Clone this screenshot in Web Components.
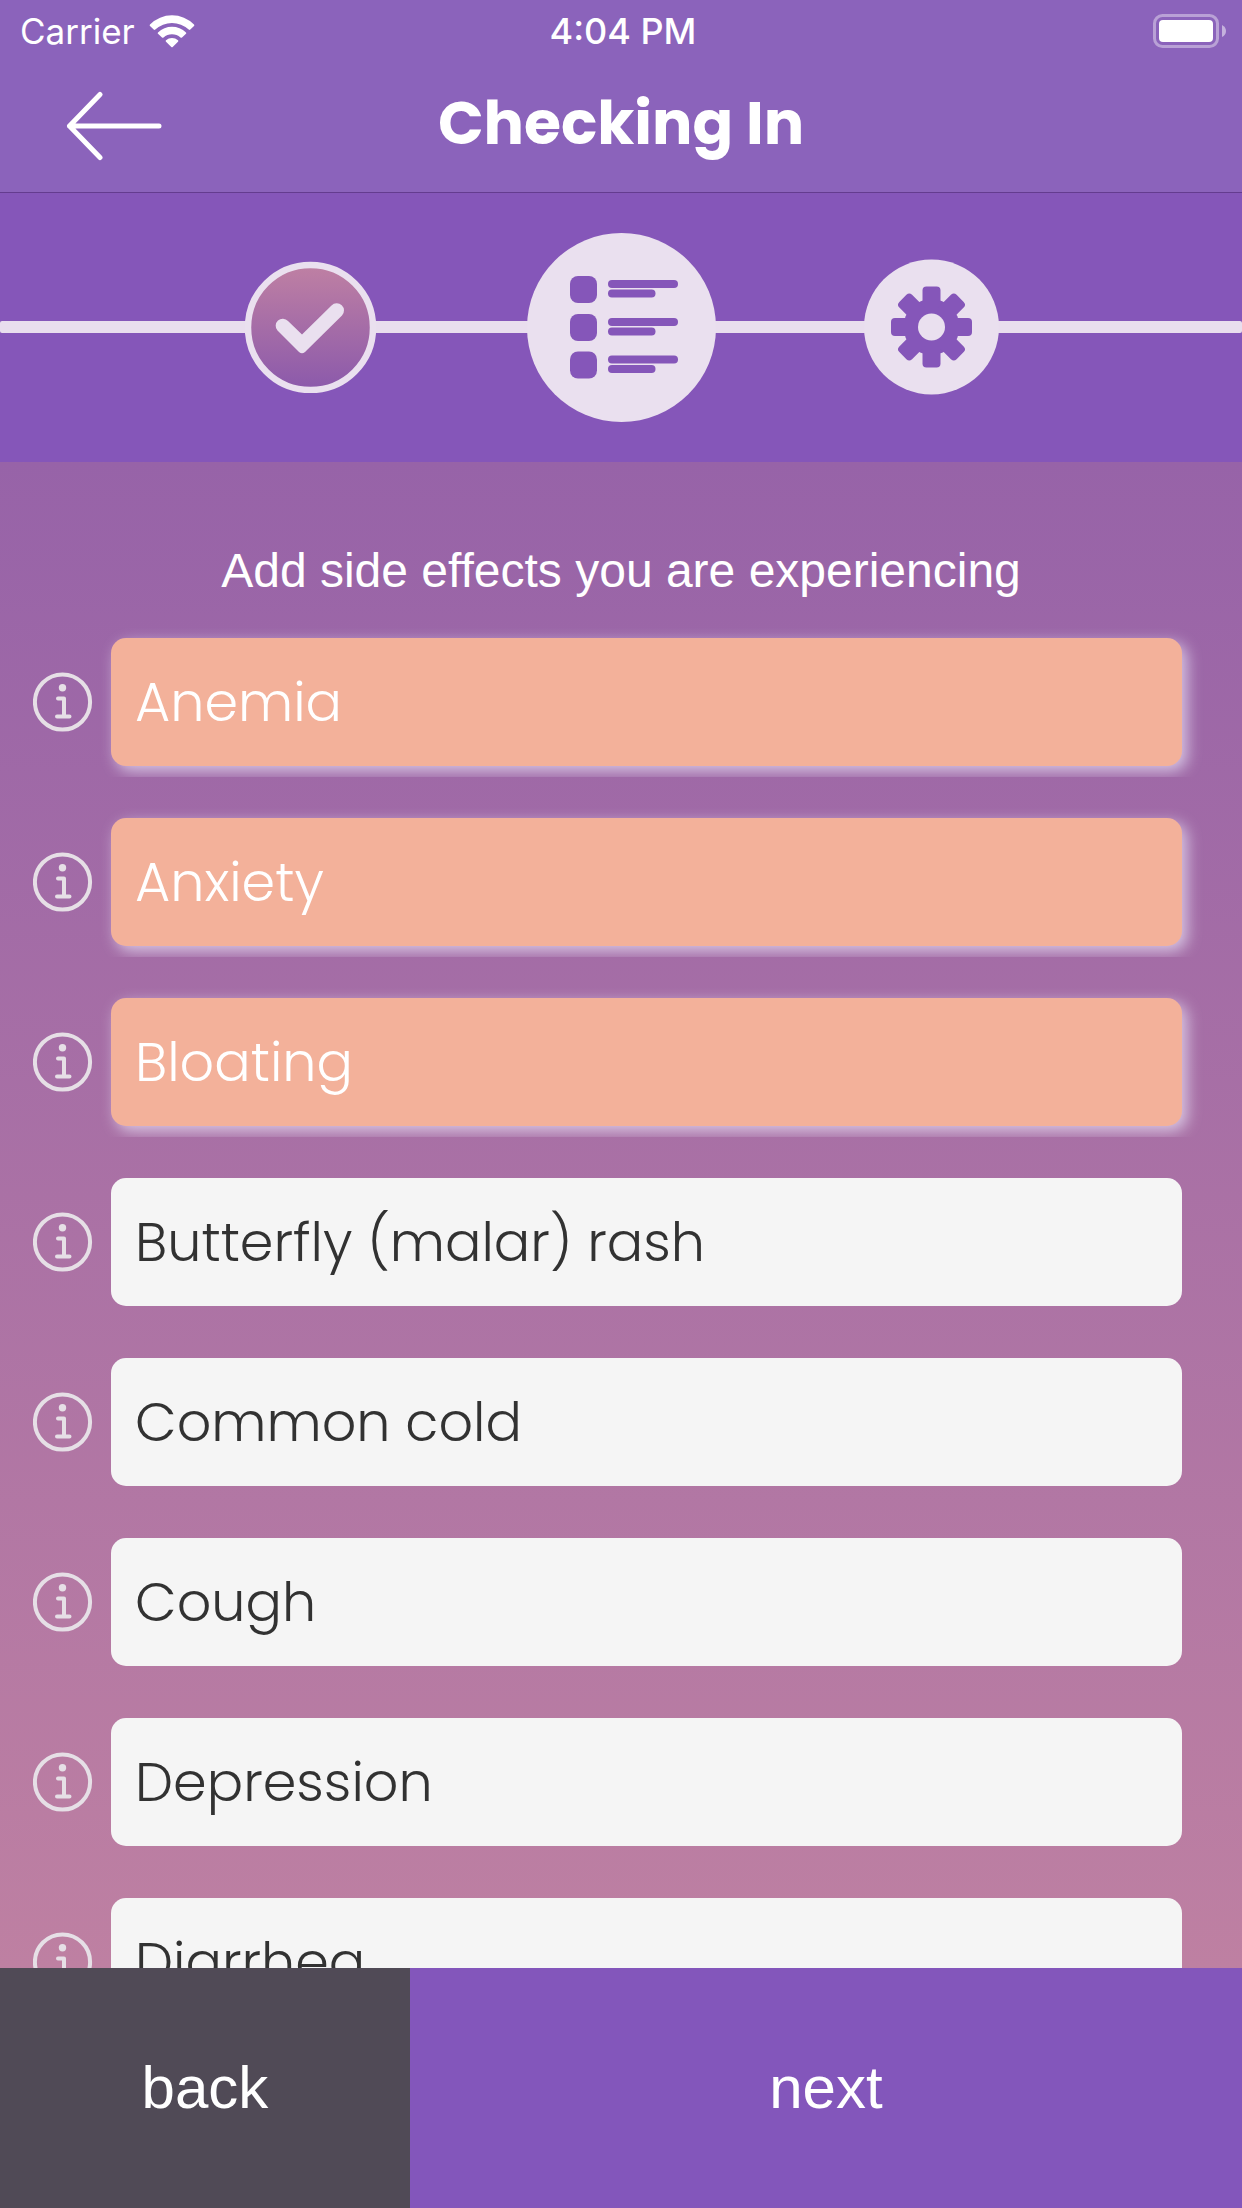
<!DOCTYPE html>
<html lang="en">
<head>
<meta charset="utf-8">
<meta name="viewport" content="width=device-width, initial-scale=1">
<title>Checking In</title>
<style>
  html, body { margin: 0; height: 100%; }
  body { font-family: "Liberation Sans", Helvetica, Arial, sans-serif; color: #fff; background: #8556b9; }
</style>
</head>
<body>
<check-in-app></check-in-app>

<script>
const define = (name, html, setup) => customElements.define(name, class extends HTMLElement {
  constructor() {
    super();
    const t = document.createElement('template');
    t.innerHTML = html;
    this.attachShadow({ mode: 'open' }).append(t.content.cloneNode(true));
  }
  connectedCallback() { if (setup) setup(this, this.shadowRoot); }
});

define('status-bar', `
<style>
  :host { display: grid; grid-template-columns: 1fr auto 1fr; align-items: center; height: 60px; padding: 1px 16px 0 20px;
          font: 400 35px/60px Inter, sans-serif; }
  .left { display: flex; align-items: center; gap: 14px; }
  .time { font-size: 36px; font-weight: 500; }
  .right { display: flex; justify-content: flex-end; }
  svg { display: block; }
</style>
<span class="left"><span>Carrier</span>
  <svg width="46" height="34" viewBox="0 0 46 34" fill="#fff" role="img" aria-label="Wi-Fi">
    <path d="M1 10.500A31 31 0 0 1 45 10.500Q45.700 11.300 45 12L41.300 15.600Q40.500 16.300 39.700 15.600A24.500 24.500 0 0 0 6.300 15.600Q5.500 16.300 4.700 15.600L1 12Q.300 11.300 1 10.500Z"/>
    <path d="M9 18.400A20.500 20.500 0 0 1 37 18.400Q37.700 19.100 37 19.800L33 23.500Q32.300 24.200 31.500 23.500A13 13 0 0 0 14.500 23.500Q13.700 24.200 13 23.500L9 19.800Q8.300 19.100 9 18.400Z"/>
    <path d="M17 26.200A9.500 9.500 0 0 1 29 26.200Q29.800 26.900 29 27.700L23.700 32.900Q23 33.600 22.300 32.900L17 27.700Q16.200 26.900 17 26.200Z"/>
  </svg>
</span>
<span class="time">4:04 PM</span>
<span class="right">
  <svg width="73" height="34" viewBox="0 0 73 34" role="img" aria-label="Battery full">
    <rect x="1.500" y="1.500" width="63" height="31" rx="8" fill="none" stroke="#fff" stroke-opacity=".4" stroke-width="3"/>
    <rect x="6" y="6" width="54" height="22" rx="4" fill="#fff"/>
    <path d="M69 11Q73 13 73 17T69 23Z" fill="#fff" fill-opacity=".5"/>
  </svg>
</span>`);

define('nav-bar', `
<style>
  :host { display: grid; grid-template-columns: 1fr auto 1fr; align-items: start; height: 131px; padding: 0 62px; }
  button { display: block; justify-self: start; margin: 30px 0 0; padding: 0; border: 0; background: none; color: inherit; cursor: pointer; }
  svg { display: block; }
  h1 { margin: 0; font: 700 60px/124px Poppins, Inter, sans-serif; }
</style>
<button type="button" aria-label="Go back">
  <svg width="100" height="70" viewBox="0 0 100 70" fill="none" stroke="#fff" stroke-width="5" stroke-linecap="round" stroke-linejoin="round"><path d="M38 3.500L7.500 35L38 66.500M7.500 35H97"/></svg>
</button>
<h1><slot></slot></h1>`);

define('progress-steps', `
<style>
  :host { display: grid; grid-template-columns: 1fr 2fr 2fr 2fr 1fr; grid-template-rows: 268px; align-items: center; justify-items: center;
          padding-bottom: 1px; background: #8556b9; }
  .line { grid-area: 1 / 1 / 2 / -1; justify-self: stretch; height: 12px; border-radius: 2px; background: #e9deee; }
  svg { display: block; grid-row: 1; }
  .a { grid-column: 2; } .b { grid-column: 3; } .c { grid-column: 4; }
</style>
<div class="line"></div>
<svg class="a" width="132" height="132" viewBox="0 0 132 132" role="img" aria-label="Step 1, done">
  <defs><linearGradient id="g" x1="0" y1="0" x2="0" y2="1"><stop offset="0" stop-color="#bf80a3"/><stop offset="1" stop-color="#8b59ab"/></linearGradient></defs>
  <circle cx="65.500" cy="66.500" r="62.500" fill="url(#g)" stroke="#eae0ef" stroke-width="6.500"/>
  <path d="M32.500 69.500A7 7 0 0 1 43 60L57 73.500L86.500 44.500A7 7 0 0 1 97 54.500L60 91Q57 93.500 54 91Z" fill="#eae0ef"/>
</svg>
<svg class="b" width="190" height="190" viewBox="0 0 190 190" role="img" aria-label="Step 2, side effects">
  <circle cx="95.500" cy="95.500" r="94.500" fill="#eae0ef"/>
  <g fill="#8556b9">
    <rect x="44" y="44" width="27" height="27" rx="8"/><rect x="82" y="48" width="70" height="8" rx="4"/><rect x="82" y="57.500" width="47.500" height="8" rx="4"/>
    <rect x="44" y="82" width="27" height="27" rx="8"/><rect x="82" y="86" width="70" height="8" rx="4"/><rect x="82" y="95.500" width="47.500" height="8" rx="4"/>
    <rect x="44" y="119.500" width="27" height="27" rx="8"/><rect x="82" y="123.500" width="70" height="8" rx="4"/><rect x="82" y="133" width="47.500" height="8" rx="4"/>
  </g>
</svg>
<svg class="c" width="136" height="136" viewBox="0 0 136 136" role="img" aria-label="Step 3, settings">
  <circle cx="67.500" cy="68" r="67.500" fill="#eae0ef"/>
  <g fill="#8556b9" transform="translate(-.5 0)">
    <circle cx="68" cy="68" r="28"/>
    <rect x="59" y="27.500" width="18" height="81" rx="4"/>
    <rect x="59" y="27.500" width="18" height="81" rx="4" transform="rotate(90 68 68)"/>
    <rect x="59" y="27.500" width="18" height="81" rx="4" transform="rotate(45 68 68)"/>
    <rect x="59" y="27.500" width="18" height="81" rx="4" transform="rotate(135 68 68)"/>
  </g>
  <circle cx="67.500" cy="68" r="13.500" fill="#eae0ef"/>
</svg>`);

define('effect-row', `
<style>
  :host { display: flex; align-items: flex-start; height: 139px; padding: 10px 60px 31px 33px; }
  button { margin: 0; border: 0; cursor: pointer; }
  .info { flex: none; width: 60px; height: 128px; margin-right: 18px; padding: 0; background: none; }
  svg { display: block; }
  .clip { flex: 1; display: flex; margin: -10px -30px 0 -10px; padding: 10px 30px 11px 10px; overflow: hidden; }
  .effect { flex: 1; height: 128px; padding: 0 24px; border-radius: 15px; background: #f5f5f5; color: #323232; text-align: left;
            font: 300 54px/128px Poppins, Inter, sans-serif; }
  .effect[aria-pressed="true"] { background: #f3b19a; color: #fff; box-shadow: 5px 5px 15px #f0f0ffb0; }
</style>
<button class="info" type="button">
  <svg width="60" height="60" viewBox="0 0 60 60" fill="none" stroke="#e6dfe6" stroke-width="4" stroke-linecap="round" stroke-linejoin="round">
    <circle cx="29.500" cy="30" r="27.600"/>
    <path d="M25 26.500H31V44.500M24 44.500H36.500"/>
    <circle cx="29.500" cy="15.700" r="3.700" fill="#e6dfe6" stroke="none"/>
  </svg>
</button>
<div class="clip"><button class="effect" type="button"><slot></slot></button></div>`,
(el, root) => {
  const effect = root.querySelector('.effect');
  effect.setAttribute('aria-pressed', el.hasAttribute('selected'));
  root.querySelector('.info').setAttribute('aria-label', 'About ' + el.textContent);
  effect.onclick = () => effect.setAttribute('aria-pressed', effect.getAttribute('aria-pressed') !== 'true');
});

define('action-bar', `
<style>
  :host { display: flex; height: 240px; }
  button { margin: 0; padding: 0; border: 0; color: #fff; font: 400 60px/80px "Liberation Sans", Helvetica, Arial, sans-serif; cursor: pointer; }
  .back { flex: 33; background: #504a56; }
  .next { flex: 67; background: #8356bb; }
</style>
<button class="back" type="button">back</button><button class="next" type="button">next</button>`);

define('check-in-app', `
<style>
  :host { display: flex; flex-direction: column; height: 100vh; }
  header { flex: none; background: #8b63bb; border-bottom: 1px solid #643c8f; }
  progress-steps, action-bar { flex: none; }
  main { flex: 1; min-height: 0; overflow-y: auto; scrollbar-width: none; background: linear-gradient(#9763a8, #be80a2); }
  h2 { margin: 0; padding: 79px 0 27px; text-align: center; font-size: 48px; line-height: 60px; font-weight: 400; }
</style>
<header><status-bar></status-bar><nav-bar>Checking In</nav-bar></header>
<progress-steps></progress-steps>
<main>
  <h2>Add side effects you are experiencing</h2>
  <effect-row selected>Anemia</effect-row>
  <effect-row selected>Anxiety</effect-row>
  <effect-row selected>Bloating</effect-row>
  <effect-row>Butterfly (malar) rash</effect-row>
  <effect-row>Common cold</effect-row>
  <effect-row>Cough</effect-row>
  <effect-row>Depression</effect-row>
  <effect-row>Diarrhea</effect-row>
</main>
<action-bar></action-bar>`);
</script>
</body>
</html>
